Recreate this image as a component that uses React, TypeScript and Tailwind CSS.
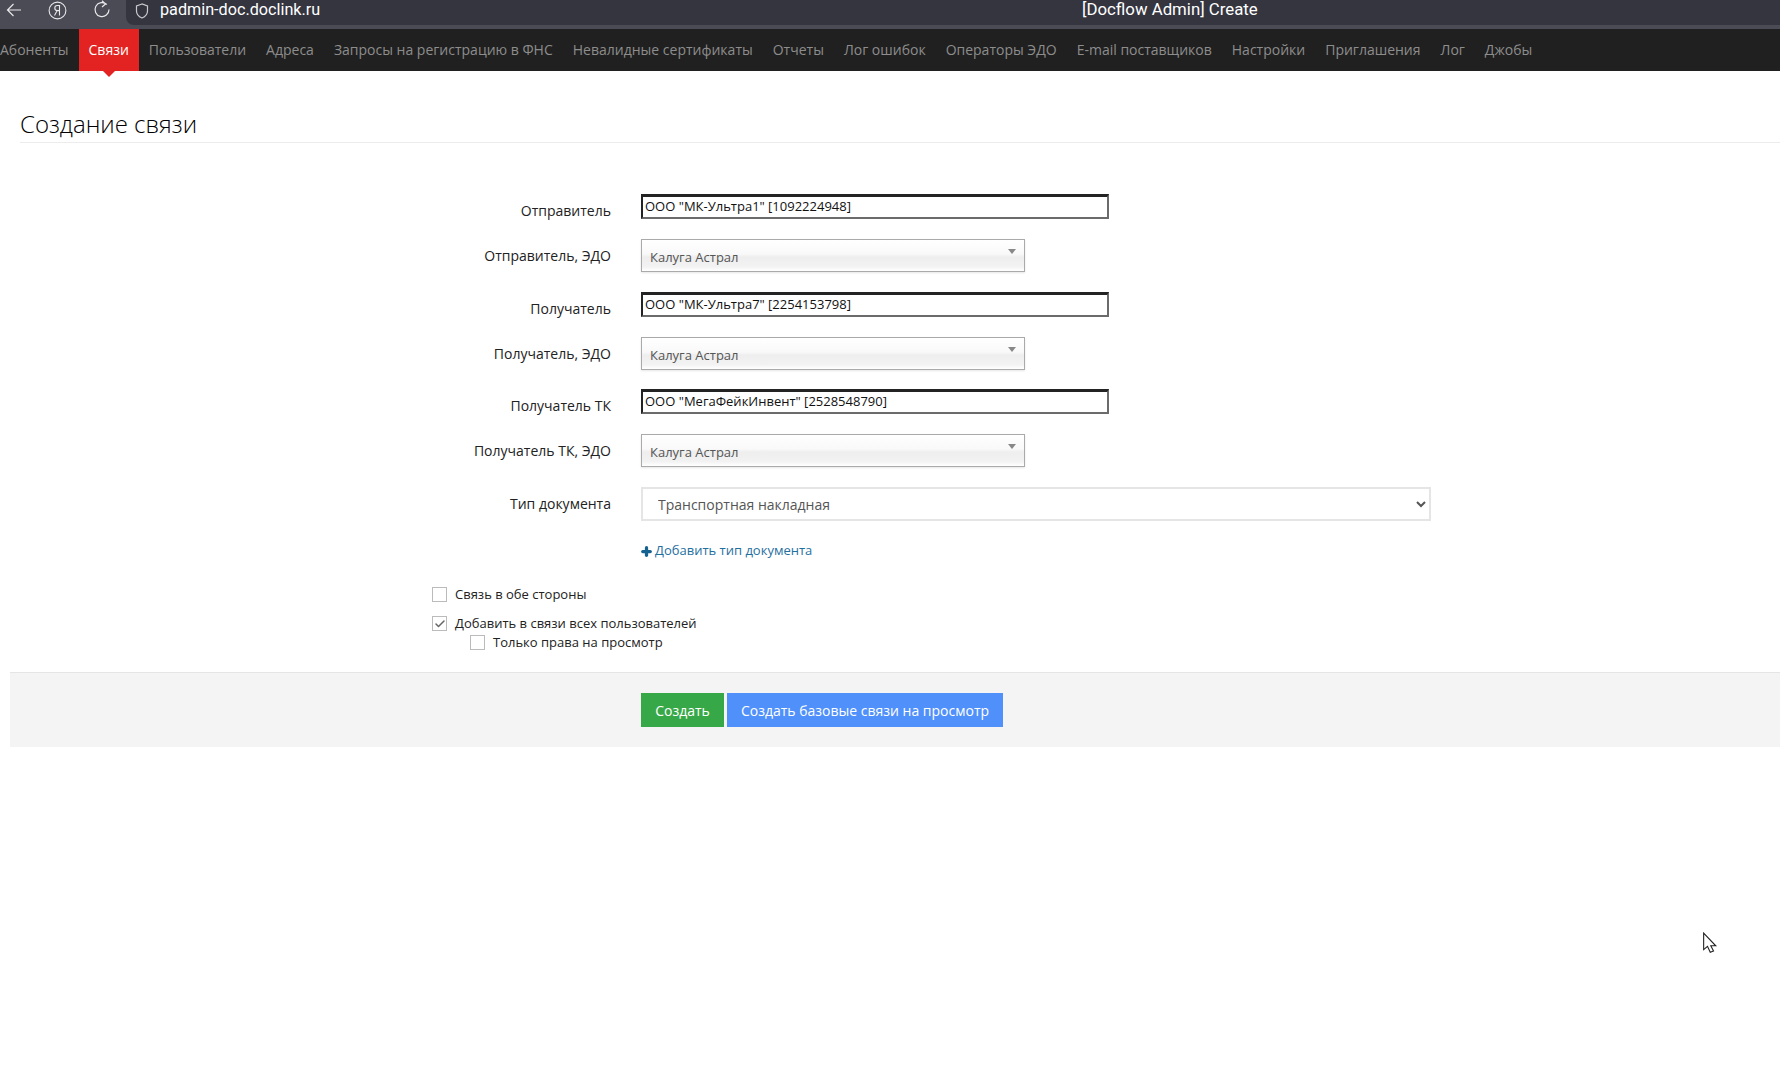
import { Check, Plus } from 'lucide-react'

const navItems = [
  'Абоненты',
  'Связи',
  'Пользователи',
  'Адреса',
  'Запросы на регистрацию в ФНС',
  'Невалидные сертификаты',
  'Отчеты',
  'Лог ошибок',
  'Операторы ЭДО',
  'E-mail поставщиков',
  'Настройки',
  'Приглашения',
  'Лог',
  'Джобы',
]

function BrowserBar() {
  return (
    <div className="flex h-[29px] bg-[#4a4b55] pb-1">
      <div className="flex w-[126px] shrink-0 items-center text-[#e8e8ea]">
        <svg className="ml-[6px] mt-[-5px] h-4 w-4" viewBox="0 0 16 16" fill="none" stroke="currentColor" strokeWidth="1.2">
          <path d="M15 8H1.500M7.500 2 1.500 8l6 6" />
        </svg>
        <svg className="ml-[26px] mt-[-5px] h-[19px] w-[19px]" viewBox="0 0 19 19" fill="none" stroke="currentColor" strokeWidth="1.1">
          <circle cx="9.500" cy="9.500" r="8.400" />
          <path d="M11.500 14.500v-10H9.300C7.700 4.500 6.800 5.500 6.800 7s.9 2.600 2.500 2.600h2.200M9.200 9.600 6.500 14.500" />
        </svg>
        <svg className="ml-[26px] mt-[-7px] h-[18px] w-[18px]" viewBox="0 0 18 18" fill="none" stroke="currentColor" strokeWidth="1.2">
          <path d="M13.800 4.500A7 7 0 1 0 16 9.500M9 .8l3.500 3.200L9 7" />
        </svg>
      </div>
      <div className="relative flex min-w-0 flex-1 items-center rounded-bl-lg bg-[#34353f] pb-[4px] text-white">
        <svg className="ml-[9px] h-4 w-[14px] text-[#c9c9cd]" viewBox="0 0 14 16" fill="none" stroke="currentColor" strokeWidth="1.200">
          <path d="M7 1 1.500 3v5c0 3.400 2.300 5.700 5.500 7 3.200-1.300 5.500-3.600 5.500-7V3z" />
        </svg>
        <span className="ml-[11px] font-['Roboto',sans-serif] text-[16.2px] leading-none">padmin-doc.doclink.ru</span>
        <span className="absolute left-[956px] top-[-1px] font-['Roboto',sans-serif] text-[16.800px] leading-[20px]">[Docflow Admin] Create</span>
      </div>
    </div>
  )
}

function TopNav() {
  return (
    <nav className="flex h-[42px] bg-[#202020] text-[14px]">
      {navItems.map((item, i) => {
        const active = item === 'Связи'
        return (
          <a
            key={item}
            className={
              'relative flex h-full items-center pb-[2px] ' +
              (i === 0 ? 'pr-[10px] ' : 'px-[10px] ') +
              (active ? 'bg-[#e32322] font-medium text-white' : 'text-[#8d8d8d]')
            }
          >
            {item}
            {active ? (
              <span className="absolute left-1/2 top-full -ml-[6px] h-0 w-0 border-x-[6px] border-t-[6px] border-x-transparent border-t-[#e32322]" />
            ) : null}
          </a>
        )
      })}
    </nav>
  )
}

function Label({ children }: { children: string }) {
  return <label className="w-[611px] shrink-0 text-right text-[14px] leading-5 text-[#222]">{children}</label>
}

function PartyInput({ label, value }: { label: string; value: string }) {
  return (
    <div className="flex h-[25px] items-center gap-[30px]">
      <div className="flex w-[611px] pt-[8px]">
        <Label>{label}</Label>
      </div>
      <div className="flex h-[25px] w-[468px] items-center border-2 border-t-[3px] border-l-[2px] border-[#232323] border-b-[#6b6b6b] border-r-[#6b6b6b] pl-[2px] text-[13px] text-[#111]">
        {value}
      </div>
    </div>
  )
}

function EdoSelect({ label }: { label: string }) {
  return (
    <div className="flex h-[33px] items-center gap-[30px]">
      <Label>{label}</Label>
      <div className="relative flex h-[33px] w-[384px] items-center border border-[#aaa] bg-[linear-gradient(#fff_0%,#f9f9f9_45%,#eeeeee_55%,#f2f2f2_85%,#fff_100%)] pl-2 pt-[5px] text-[13px] text-[#555] shadow-[0_1px_2px_rgba(0,0,0,0.1)]">
        Калуга Астрал
        <span className="absolute right-[8px] top-[9px] h-0 w-0 border-x-[4px] border-t-[5px] border-x-transparent border-t-[#888]" />
      </div>
    </div>
  )
}

function CheckRow({ label, checked }: { label: string; checked?: boolean }) {
  return (
    <label className="flex h-[15px] items-center gap-[8px] text-[13px] text-[#222]">
      <span className="flex h-[15px] w-[15px] shrink-0 items-center justify-center border border-[#bbb] bg-white">
        {checked ? <Check className="h-3 w-3 text-[#666]" strokeWidth={3} /> : null}
      </span>
      {label}
    </label>
  )
}

export default function App() {
  return (
    <div className="min-h-[1089px] bg-white font-['Open_Sans',sans-serif]">
      <BrowserBar />
      <TopNav />

      <div className="pl-[10px]">
        <div className="ml-[10px] border-b border-[#ececec] pb-[2px] pt-[36px]">
          <h1 className="text-[24px] font-light leading-[33px] text-[#000]">Создание связи</h1>
        </div>

        <form className="mt-[51px] -ml-[10px]">
          <div className="flex flex-col gap-[20px]">
            <PartyInput label="Отправитель" value={'ООО "МК-Ультра1" [1092224948]'} />
            <EdoSelect label="Отправитель, ЭДО" />
            <PartyInput label="Получатель" value={'ООО "МК-Ультра7" [2254153798]'} />
            <EdoSelect label="Получатель, ЭДО" />
            <div className="-mt-[1px]">
              <PartyInput label="Получатель ТК" value={'ООО "МегаФейкИнвент" [2528548790]'} />
            </div>
            <EdoSelect label="Получатель ТК, ЭДО" />
            <div className="flex items-center gap-[30px]">
              <Label>Тип документа</Label>
              <select className="h-[34px] w-[790px] border-2 border-[#e5e5e5] bg-white pl-[11px] text-[14px] text-[#555]">
                <option>Транспортная накладная</option>
              </select>
            </div>
          </div>

          <a className="ml-[640px] mt-[21px] flex h-[18px] items-center gap-[2px] text-[13px] text-[#1f6f9f]">
            <Plus className="h-[13px] w-[13px] text-[#15618f]" strokeWidth={6} />
            Добавить тип документа
          </a>

          <div className="ml-[432px] mt-[27px] flex flex-col">
            <CheckRow label="Связь в обе стороны" />
            <div className="mt-[14px]">
              <CheckRow label="Добавить в связи всех пользователей" checked />
            </div>
            <div className="ml-[38px] mt-[4px]">
              <CheckRow label="Только права на просмотр" />
            </div>
          </div>
        </form>

        <div className="mt-[22px] flex h-[75px] gap-[3px] border-t border-[#e5e5e5] bg-[#f4f4f4] pl-[631px] pt-[20px]">
          <button type="button" className="h-[34px] w-[83px] bg-[#37a847] text-[14px] text-white">
            Создать
          </button>
          <button type="button" className="h-[34px] w-[276px] bg-[#4f90fb] text-[14px] text-white">
            Создать базовые связи на просмотр
          </button>
        </div>
      </div>

      <svg className="absolute left-[1702px] top-[932px] h-[20px] w-[14px] scale-110 origin-top-left" viewBox="0 0 14 20" fill="white" stroke="#222" strokeWidth="1">
        <path d="M1.500 1v15l3.500-3 2.500 5.500 3-1.300L8 12.500h4.500z" />
      </svg>
    </div>
  )
}
